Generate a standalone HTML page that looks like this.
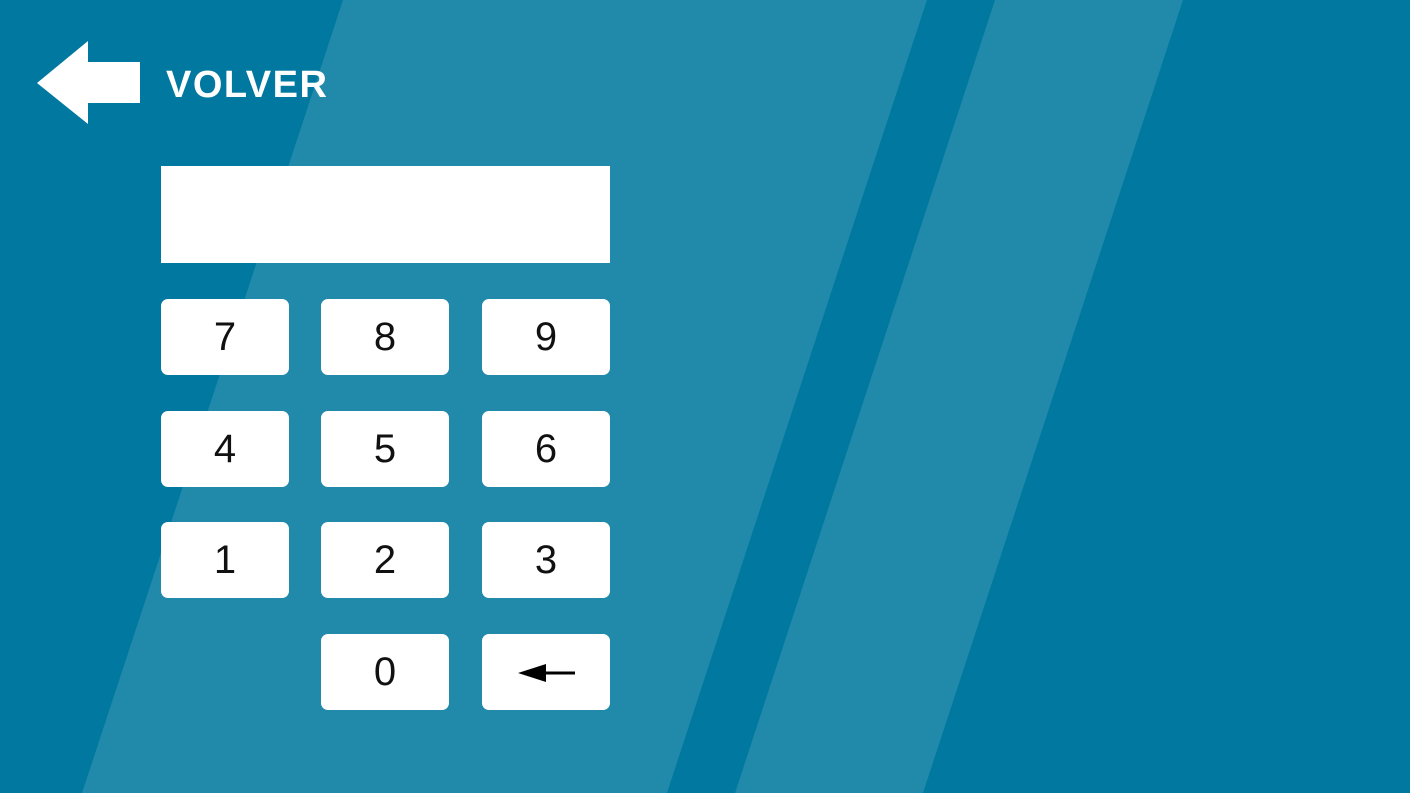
<!DOCTYPE html>
<html><head><meta charset="utf-8"><style>
html,body{margin:0;padding:0;width:1410px;height:793px;overflow:hidden;background:#00789f;font-family:"Liberation Sans",sans-serif}
svg.bg{position:absolute;left:0;top:0}
.k{position:absolute;width:128px;height:76px;background:#fff;border-radius:7px;color:#111;font-size:40px;line-height:76px;text-align:center}
.disp{position:absolute;left:161px;top:166px;width:449px;height:97px;background:#fff}
.vt{position:absolute;left:166px;top:64px;color:#fff;font-weight:bold;font-size:38px;letter-spacing:1.5px}
</style></head><body>
<svg class="bg" width="1410" height="793">
<polygon points="343,0 927,0 667,793 82,793" fill="#2189a9"/>
<polygon points="995,0 1183,0 923,793 735,793" fill="#2189a9"/>
<polygon points="37,83 88,41 88,62 140,62 140,103 88,103 88,124" fill="#fff"/>
</svg>
<div class="vt">VOLVER</div>
<div class="disp"></div>
<div class="k" style="left:161px;top:299px">7</div>
<div class="k" style="left:321px;top:299px">8</div>
<div class="k" style="left:482px;top:299px">9</div>
<div class="k" style="left:161px;top:411px">4</div>
<div class="k" style="left:321px;top:411px">5</div>
<div class="k" style="left:482px;top:411px">6</div>
<div class="k" style="left:161px;top:522px">1</div>
<div class="k" style="left:321px;top:522px">2</div>
<div class="k" style="left:482px;top:522px">3</div>
<div class="k" style="left:321px;top:634px">0</div>
<div class="k" style="left:482px;top:634px"><svg width="128" height="76" style="position:absolute;left:0;top:0"><line x1="60" y1="39" x2="93" y2="39" stroke="#000" stroke-width="3"/><polygon points="36,39 64,30 64,48" fill="#000"/></svg></div>
</body></html>
